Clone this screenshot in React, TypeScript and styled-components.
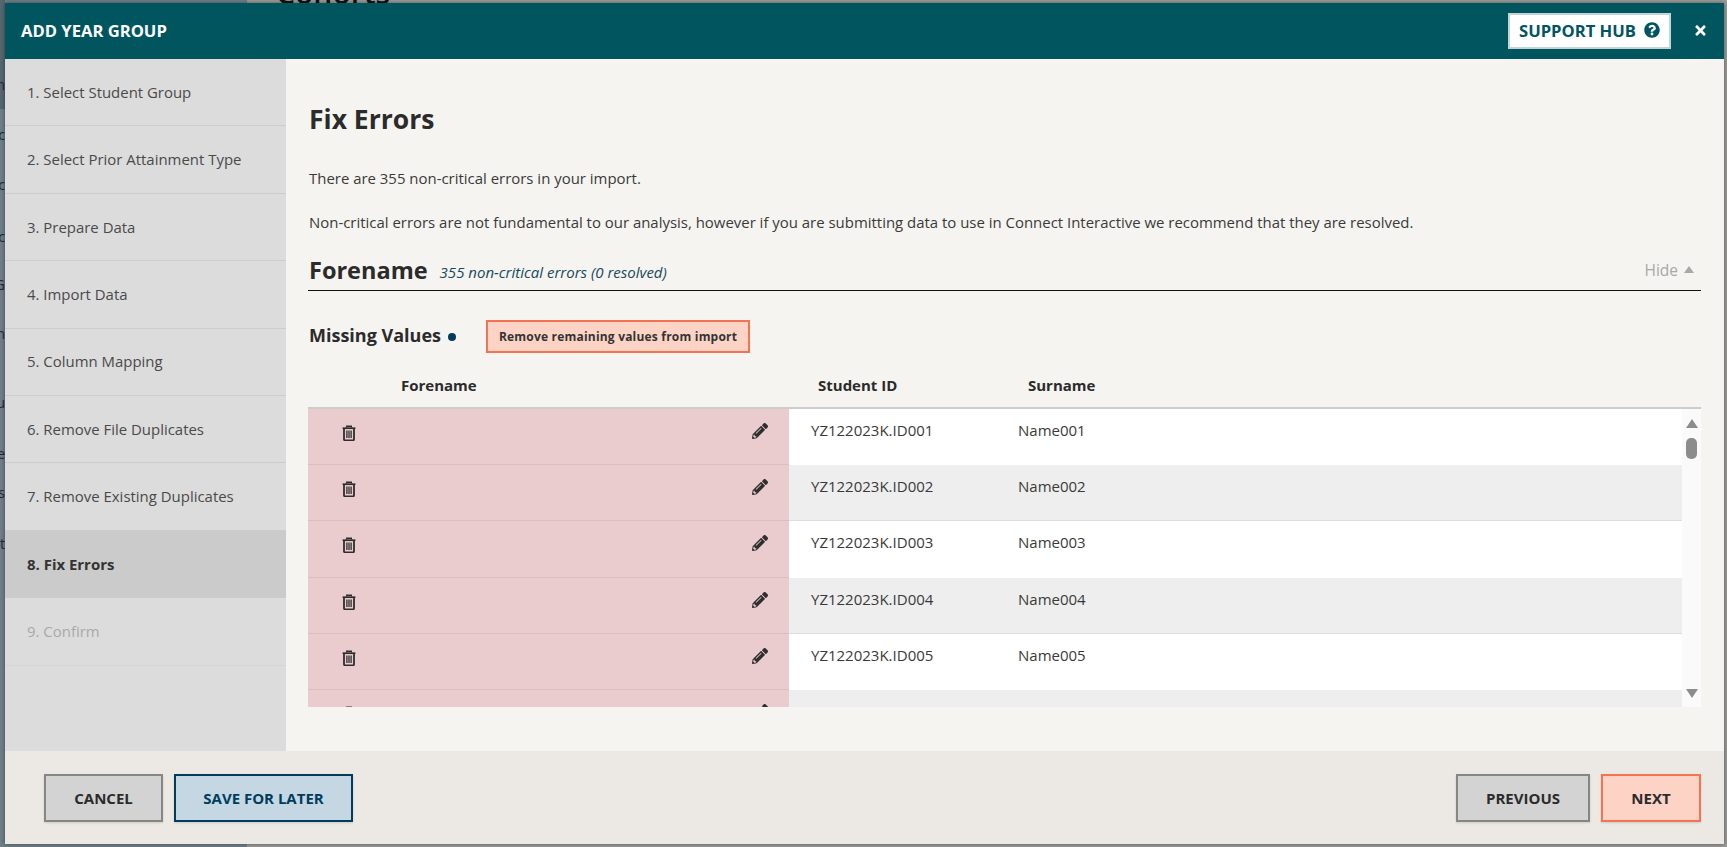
import React from "react";
import styled, { createGlobalStyle } from "styled-components";
import { FaPencilAlt, FaQuestionCircle, FaTimes } from "react-icons/fa";

const Global = createGlobalStyle`
  html, body { margin: 0; padding: 0; }
  body { font-family: "Open Sans", "Liberation Sans", sans-serif; color: #2e2e2e; background: #9b9b9b; }
  * { box-sizing: border-box; }
`;

const Page = styled.div`
  position: relative;
  width: 1727px;
  height: 847px;
  overflow: hidden;
  display: flex;
  background: #9a9a98;
`;

const BackNav = styled.div`
  width: 247px;
  height: 100%;
  flex: none;
  background: #6f7f87;
`;

const BackTitle = styled.div`
  position: absolute;
  left: 276px;
  top: -22px;
  font-size: 30px;
  font-weight: 600;
  line-height: 30px;
  color: #111;
`;

const BackLabel = styled.span<{ $top: number }>`
  position: absolute;
  right: calc(100% - 5px);
  top: ${(p) => p.$top}px;
  font-size: 14px;
  line-height: 18px;
  color: #1f2a30;
  white-space: nowrap;
`;

const BackNavActive = styled.div`
  position: absolute;
  left: 0;
  top: 0;
  width: 5px;
  height: 109px;
  background: #566770;
`;

const Modal = styled.div`
  position: absolute;
  left: 5px;
  top: 3px;
  width: 1719px;
  height: 841px;
  display: flex;
  flex-direction: column;
  background: #f5f4f0;
  box-shadow: 0 0 4px rgba(0, 0, 0, 0.45);
`;

const Header = styled.header`
  height: 56px;
  flex: none;
  display: flex;
  align-items: center;
  background: #00555f;
  padding: 0 16px 0 16px;
`;

const HeaderTitle = styled.h1`
  margin: -2px 0 0;
  flex: 1;
  font-size: 16.6px;
  font-weight: 700;
  color: #fff;
  text-transform: uppercase;
`;

const SupportButton = styled.button`
  display: flex;
  align-items: center;
  justify-content: center;
  gap: 8px;
  width: 163px;
  height: 36px;
  padding: 0 0 2px;
  background: #fff;
  border: 2px solid #c3d5d7;
  font: 700 16.6px "Open Sans", sans-serif;
  color: #00555f;
`;

const CloseButton = styled.button`
  display: flex;
  align-items: center;
  justify-content: center;
  margin: -2px 0 0 21px;
  width: 16px;
  height: 20px;
  padding: 0;
  border: 0;
  background: none;
  color: #fff;
  font-size: 15px;
`;

const Body = styled.div`
  flex: 1;
  min-height: 0;
  display: flex;
`;

const Sidebar = styled.nav`
  width: 281px;
  flex: none;
  background: #dcdcdc;
`;

const Step = styled.div<{ $active?: boolean; $disabled?: boolean }>`
  height: 67.4px;
  display: flex;
  align-items: center;
  padding: 0 0 0.6px 22px;
  font-size: 14.95px;
  font-weight: ${(p) => (p.$active ? 700 : 400)};
  color: ${(p) => (p.$disabled ? "#a9a9a9" : p.$active ? "#333" : "#4a4a4a")};
  background: ${(p) => (p.$active ? "#cbcbcb" : "transparent")};
  border-bottom: 1px solid ${(p) => (p.$active ? "#cbcbcb" : p.$disabled ? "#d5d5d5" : "#cdcdcd")};
`;

const Content = styled.main`
  flex: 1;
  min-width: 0;
  padding: 0 23px 0 22px;
  display: flex;
  flex-direction: column;
`;

const Title = styled.h2`
  margin: 42px 0 0 1px;
  font-size: 26.5px;
  line-height: 36px;
  font-weight: 700;
  color: #2b2b2b;
`;

const Para = styled.p`
  margin: 0 0 0 1px;
  font-size: 14.95px;
  line-height: 22px;
  color: #3a3a3a;
  &:first-of-type { margin-top: 30px; }
  & + & { margin-top: 22px; }
`;

const SectionHead = styled.div`
  margin-top: 22px;
  height: 36px;
  display: flex;
  align-items: center;
  padding: 0 0 6px 1px;
  border-bottom: 1px solid #111;
`;

const SectionName = styled.h3`
  margin: 0;
  font-size: 23.5px;
  line-height: 32px;
  font-weight: 700;
  color: #2b2b2b;
`;

const SectionNote = styled.em`
  margin: 5px 0 0 12px;
  flex: 1;
  font-size: 15px;
  color: #18495f;
`;

const HideToggle = styled.span`
  display: flex;
  align-items: center;
  gap: 6px;
  padding-right: 7px;
  font-size: 15.5px;
  color: #a8a8a8;
`;

const TriUp = styled.i<{ $w: number; $h: number; $c: string }>`
  display: block;
  width: 0;
  height: 0;
  border-left: ${(p) => p.$w / 2}px solid transparent;
  border-right: ${(p) => p.$w / 2}px solid transparent;
  border-bottom: ${(p) => p.$h}px solid ${(p) => p.$c};
`;

const TriDown = styled.i<{ $w: number; $h: number; $c: string }>`
  display: block;
  width: 0;
  height: 0;
  border-left: ${(p) => p.$w / 2}px solid transparent;
  border-right: ${(p) => p.$w / 2}px solid transparent;
  border-top: ${(p) => p.$h}px solid ${(p) => p.$c};
`;

const MissingBar = styled.div`
  margin-top: 29px;
  height: 33px;
  display: flex;
  align-items: center;
  padding-left: 1px;
`;

const MissingLabel = styled.h4`
  margin: -3px 0 0;
  font-size: 18px;
  font-weight: 700;
  color: #2b2b2b;
`;

const Dot = styled.i`
  display: block;
  width: 8px;
  height: 8px;
  margin: 0 0 0 7px;
  border-radius: 50%;
  background: #003d5c;
`;

const RemoveButton = styled.button`
  margin-left: 30px;
  width: 264px;
  height: 33px;
  padding: 0;
  background: #fdd3c6;
  border: 2px solid #f47350;
  font: 700 12px "Open Sans", sans-serif;
  letter-spacing: 0.2px;
  color: #333;
`;

const TableHead = styled.div`
  margin-top: 22px;
  height: 34px;
  display: grid;
  grid-template-columns: 510px 210px 1fr;
  align-items: start;
  border-bottom: 2px solid #ccc;
  font-size: 15px;
  font-weight: 700;
  line-height: 20px;
  color: #2b2b2b;
`;

const HeadCell = styled.div<{ $first?: boolean }>`
  padding-left: ${(p) => (p.$first ? "93px" : "0")};
`;

const TableWrap = styled.div`
  height: 298px;
  display: flex;
  background: #fff;
`;

const Rows = styled.div`
  flex: 1;
  min-width: 0;
  overflow: hidden;
`;

const Row = styled.div<{ $even: boolean }>`
  height: 56.2px;
  display: flex;
  background: ${(p) => (p.$even ? "#eeeeee" : "#ffffff")};
  border-bottom: 1px solid ${(p) => (p.$even ? "#dedede" : "#ffffff")};
`;

const ErrorCell = styled.div`
  width: 481px;
  flex: none;
  display: flex;
  justify-content: space-between;
  align-items: flex-start;
  background: #eaccce;
  border-bottom: 1px solid #dfbcc0;
  margin-bottom: -1px;
  padding: 15px 21px 0 34px;
  color: #2e2e2e;
`;

const TrashSvg = styled.svg`
  width: 14px;
  height: 16px;
  margin-top: 1px;
  fill: none;
  stroke: currentColor;
`;

const PencilIcon = styled(FaPencilAlt)`
  width: 16px;
  height: 16px;
  margin-top: -1px;
`;

const IdCell = styled.div`
  width: 229px;
  flex: none;
  padding: 10px 0 0 22px;
  font-size: 15px;
  line-height: 22px;
  color: #3a3a3a;
`;

const NameCell = styled(IdCell)`
  flex: 1;
  width: auto;
  padding-left: 0;
`;

const ScrollTrack = styled.div`
  width: 19px;
  flex: none;
  display: flex;
  flex-direction: column;
  align-items: center;
  padding: 10px 0 9px;
  background: #fafafa;
`;

const ScrollThumb = styled.div`
  width: 11px;
  height: 21px;
  margin-top: 10px;
  margin-bottom: auto;
  border-radius: 5px;
  background: #8c8c8c;
`;

const Footer = styled.footer`
  height: 93px;
  flex: none;
  display: flex;
  align-items: flex-start;
  gap: 11px;
  padding: 23px 23px 0 39px;
  background: #ece9e4;
`;

const tones = {
  grey: { bg: "#d3d3d3", border: "#868686", fg: "#2b2b2b" },
  blue: { bg: "#c5d7e2", border: "#003d5c", fg: "#003d5c" },
  coral: { bg: "#fdd3c6", border: "#f47350", fg: "#2b2b2b" },
};

const FootButton = styled.button<{ $w: number; $tone: keyof typeof tones }>`
  width: ${(p) => p.$w}px;
  height: 48px;
  padding: 0;
  background: ${(p) => tones[p.$tone].bg};
  border: 2px solid ${(p) => tones[p.$tone].border};
  box-shadow: 0 1px 2px rgba(0, 0, 0, 0.12);
  font: 700 15px "Open Sans", sans-serif;
  text-transform: uppercase;
  color: ${(p) => tones[p.$tone].fg};
`;

const Spacer = styled.div`
  flex: 1;
`;

const TrashIcon = () => (
  <TrashSvg viewBox="0 0 14 16" aria-hidden="true">
    <path d="M4.7 2.6V1.2h4.6v1.4" strokeWidth="1.4" />
    <path d="M0.6 3.2h12.8" strokeWidth="1.7" />
    <path d="M2 3.2v11c0 .7.5 1.1 1.1 1.1h7.8c.6 0 1.1-.4 1.1-1.1v-11" strokeWidth="1.8" />
    <path d="M4.9 5.6v7.4M7 5.6v7.4M9.1 5.6v7.4" strokeWidth="1.3" />
  </TrashSvg>
);

const steps = [
  "1. Select Student Group",
  "2. Select Prior Attainment Type",
  "3. Prepare Data",
  "4. Import Data",
  "5. Column Mapping",
  "6. Remove File Duplicates",
  "7. Remove Existing Duplicates",
  "8. Fix Errors",
  "9. Confirm",
];

const backLabels: [string, number][] = [
  ["n", 76], ["c", 126], ["c", 176], ["c", 228], ["G", 276],
  ["n", 325], ["u", 394], ["e", 445], ["ns", 484], ["st", 535],
];

const rows = [1, 2, 3, 4, 5, 6];

export default function App() {
  return (
    <Page>
      <Global />
      <BackNav />
      <BackNavActive />
      <BackTitle>Cohorts</BackTitle>
      {backLabels.map(([t, top]) => (
        <BackLabel key={top} $top={top}>{t}</BackLabel>
      ))}
      <Modal>
        <Header>
          <HeaderTitle>Add Year Group</HeaderTitle>
          <SupportButton>
            SUPPORT HUB <FaQuestionCircle size={16} />
          </SupportButton>
          <CloseButton aria-label="Close"><FaTimes /></CloseButton>
        </Header>
        <Body>
          <Sidebar>
            {steps.map((s, i) => (
              <Step key={s} $active={i === 7} $disabled={i === 8}>{s}</Step>
            ))}
          </Sidebar>
          <Content>
            <Title>Fix Errors</Title>
            <Para>There are 355 non-critical errors in your import.</Para>
            <Para>
              Non-critical errors are not fundamental to our analysis, however if you are submitting data to use in Connect Interactive we recommend that they are resolved.
            </Para>
            <SectionHead>
              <SectionName>Forename</SectionName>
              <SectionNote>355 non-critical errors (0 resolved)</SectionNote>
              <HideToggle>Hide <TriUp $w={11} $h={7} $c="#a8a8a8" /></HideToggle>
            </SectionHead>
            <MissingBar>
              <MissingLabel>Missing Values</MissingLabel>
              <Dot />
              <RemoveButton>Remove remaining values from import</RemoveButton>
            </MissingBar>
            <TableHead>
              <HeadCell $first>Forename</HeadCell>
              <HeadCell>Student ID</HeadCell>
              <HeadCell>Surname</HeadCell>
            </TableHead>
            <TableWrap>
              <Rows>
                {rows.map((n) => (
                  <Row key={n} $even={n % 2 === 0}>
                    <ErrorCell>
                      <TrashIcon />
                      <PencilIcon />
                    </ErrorCell>
                    {n < 6 && <IdCell>YZ122023K.ID00{n}</IdCell>}
                    {n < 6 && <NameCell>Name00{n}</NameCell>}
                  </Row>
                ))}
              </Rows>
              <ScrollTrack>
                <TriUp $w={13} $h={9} $c="#8c8c8c" />
                <ScrollThumb />
                <TriDown $w={13} $h={9} $c="#8c8c8c" />
              </ScrollTrack>
            </TableWrap>
          </Content>
        </Body>
        <Footer>
          <FootButton $w={119} $tone="grey">Cancel</FootButton>
          <FootButton $w={179} $tone="blue">Save for later</FootButton>
          <Spacer />
          <FootButton $w={134} $tone="grey">Previous</FootButton>
          <FootButton $w={100} $tone="coral">Next</FootButton>
        </Footer>
      </Modal>
    </Page>
  );
}
